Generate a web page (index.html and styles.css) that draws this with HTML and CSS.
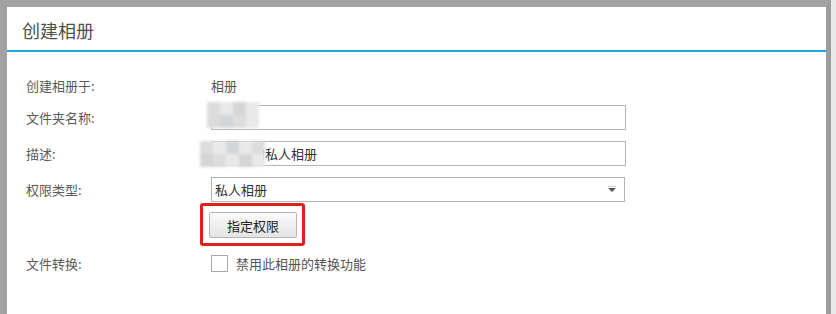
FILE: index.html
```html
<!DOCTYPE html>
<html lang="zh-CN">
<head>
<meta charset="utf-8">
<title>创建相册</title>
<link rel="stylesheet" href="styles.css">
</head>
<body>
<div class="frame">
  <div class="dialog">
    <div class="header"><span class="title">创建相册</span></div>
    <div class="form">
      <div class="row r1">
        <div class="label">创建相册于:</div>
        <div class="value">相册</div>
      </div>
      <div class="row r2">
        <div class="label">文件夹名称:</div>
        <div class="value">
          <div class="field">
            <div class="input"></div>
            <div class="mask m1"><i></i><i></i><i></i><i></i><i></i><i></i><i></i><i></i></div>
          </div>
        </div>
      </div>
      <div class="row r3">
        <div class="label">描述:</div>
        <div class="value">
          <div class="field">
            <div class="input desc">的私人相册</div>
            <div class="mask m2"><i></i><i></i><i></i><i></i><i></i><i></i><i></i><i></i><i></i><i></i></div>
          </div>
        </div>
      </div>
      <div class="row r4">
        <div class="label">权限类型:</div>
        <div class="value">
          <div class="select"><span>私人相册</span>
            <svg class="arrow" width="10" height="7" viewBox="0 0 10 7"><rect x="1" y="0" width="8" height="1" fill="#c8c8c8"/><path d="M1 2 H9 L5 6 Z" fill="#555"/></svg>
          </div>
        </div>
      </div>
      <div class="row r5">
        <div class="label"></div>
        <div class="value">
          <div class="highlight"><button class="btn">指定权限</button></div>
        </div>
      </div>
      <div class="row r6">
        <div class="label">文件转换:</div>
        <div class="value check">
          <span class="box"></span><span>禁用此相册的转换功能</span>
        </div>
      </div>
    </div>
  </div>
</div>
</body>
</html>
```

FILE: styles.css
```css
html, body {
  margin: 0;
  padding: 0;
  background: #e9e9e9;
  width: 836px;
  height: 314px;
  overflow: hidden;
  font-family: "Noto Sans CJK SC", "Noto Sans", sans-serif;
}
.frame {
  width: 831px;
  height: 314px;
  box-sizing: border-box;
  border-top: 7px solid #a2a2a2;
  border-left: 7px solid #a2a2a2;
  border-right: 5px solid #9c9c9c;
  background: #fff;
}
.dialog {
  height: 100%;
  background: #fff;
}
.header {
  height: 43px;
  border-bottom: 2px solid #1ba8dc;
  box-sizing: content-box;
  padding-left: 15px;
}
.title {
  display: block;
  padding-top: 11px;
  line-height: 24px;
  font-size: 18px;
  color: #505050;
}
.form {
  padding-left: 19px;
  padding-top: 20px;
  color: #555;
  font-size: 13px;
}
.row {
  display: flex;
  align-items: center;
}
.label {
  width: 185px;
  flex: none;
  color: #5a5a5a;
}
.value { color: #555; }
.r1 { height: 26px; }
.r2 { height: 25px; margin-top: 7px; }
.r3 { height: 25px; margin-top: 11px; }
.r4 { height: 25px; margin-top: 11px; }
.r5 { height: 43px; margin-top: 1px; }
.r6 { height: 18px; margin-top: 8px; }
.field {
  position: relative;
  width: 415px;
}
.input {
  width: 415px;
  height: 25px;
  box-sizing: border-box;
  border: 1px solid #b3b3b3;
  line-height: 23px;
  color: #333;
  background: #fff;
}
.desc { padding-left: 40px; }
.mask {
  position: absolute;
  display: grid;
  grid-template-columns: repeat(5, 13px);
  grid-auto-rows: 13px;
  filter: blur(1.5px);
}
.mask i { display: block; background: #dcdcdc; }
.mask i:nth-child(2n) { background: #e9e9e9; }
.mask i:nth-child(3n) { background: #d3d6d8; }
.m1 { left: -4px; top: -3px; grid-template-columns: repeat(4, 13px); }
.m2 { left: -11px; top: 0; }
.select {
  position: relative;
  width: 414px;
  height: 25px;
  box-sizing: border-box;
  border: 1px solid #b3b3b3;
  padding-left: 3px;
  line-height: 23px;
  color: #333;
  display: flex;
  align-items: center;
  justify-content: space-between;
}
.arrow { margin-right: 7px; }
.highlight {
  margin-left: -11px;
  border: 3px solid #e0201c;
  border-radius: 3px;
  padding: 6px 5px 5px 6px;
  display: flex;
}
.btn {
  width: 88px;
  height: 26px;
  margin: 0;
  padding: 0;
  border: 1px solid #b4b4b4;
  border-radius: 2px;
  background: linear-gradient(#fafafa, #e4e4e4);
  font-family: inherit;
  font-size: 13px;
  color: #222;
}
.check {
  display: flex;
  align-items: center;
  gap: 8px;
}
.box {
  width: 17px;
  height: 17px;
  box-sizing: border-box;
  border: 1px solid #a9a9a9;
  background: #fff;
}
```
